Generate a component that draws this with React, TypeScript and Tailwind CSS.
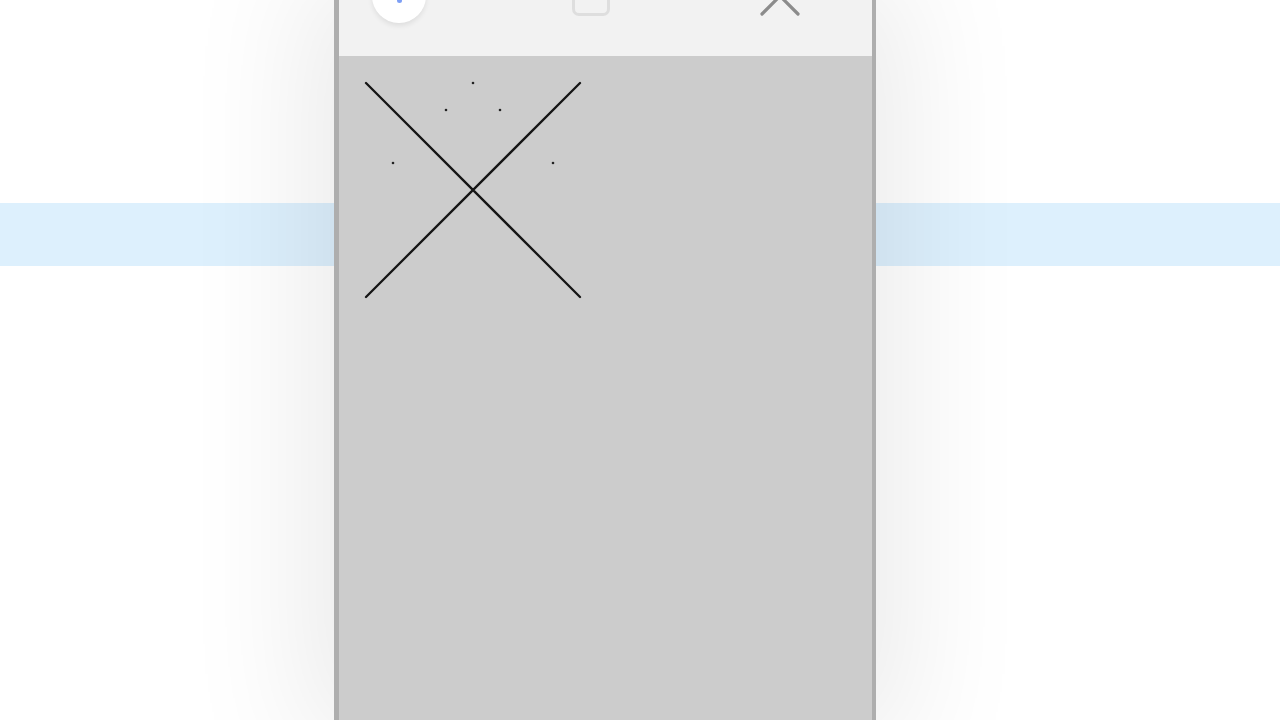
import React from "react"

const dots: [number, number][] = [
  [134, 27],
  [107, 54],
  [161, 54],
  [54, 107],
  [214, 107],
]

const App: React.FC = () => (
  <div className="relative w-full h-[720px] overflow-hidden bg-white font-['Liberation_Sans',sans-serif]">
    <div className="absolute inset-x-0 top-[203px] h-[63px] bg-[#ddf0fd]" />
    <div className="relative flex h-full pl-[334px]">
      <div className="flex flex-col w-[542px] h-full border-l-[5px] border-r-[4px] border-[#aeaeae] shadow-[0_0_120px_25px_rgba(0,0,0,0.085)]">
        {/* toolbar */}
        <div className="flex items-start h-[56px] shrink-0 bg-[#f2f2f2] overflow-hidden">
          <div className="ml-[33px] -mt-[31px] w-[54px] h-[54px] rounded-full bg-white shadow-[0_3px_5px_rgba(0,0,0,0.08)] flex items-end justify-center pb-[20px] blur-[0.6px]">
            <div className="w-[5px] h-[5px] rounded-full bg-[#7d9ff5]" />
          </div>
          <div className="ml-[146px] -mt-[22px] w-[38px] h-[38px] rounded-[7px] border-[3px] border-[#dedede] blur-[0.5px]" />
          <svg className="ml-[150px] -mt-[24px] blur-[0.5px]" width="40" height="40" viewBox="0 0 40 40">
            <path d="M2 2 L38 38 M38 2 L2 38" stroke="#8c8c8c" strokeWidth="3.2" strokeLinecap="round" />
          </svg>
        </div>
        {/* canvas */}
        <div className="flex-1 bg-[#cccccc]">
          <svg width="533" height="664" viewBox="0 0 533 664">
            <path d="M27 27 L241 241 M241 27 L27 241" stroke="#151515" strokeWidth="2.3" strokeLinecap="round" />
            {dots.map(([x, y]) => (
              <circle key={`${x}-${y}`} cx={x} cy={y} r="1.3" fill="#222" />
            ))}
          </svg>
        </div>
      </div>
    </div>
  </div>
)

export default App
